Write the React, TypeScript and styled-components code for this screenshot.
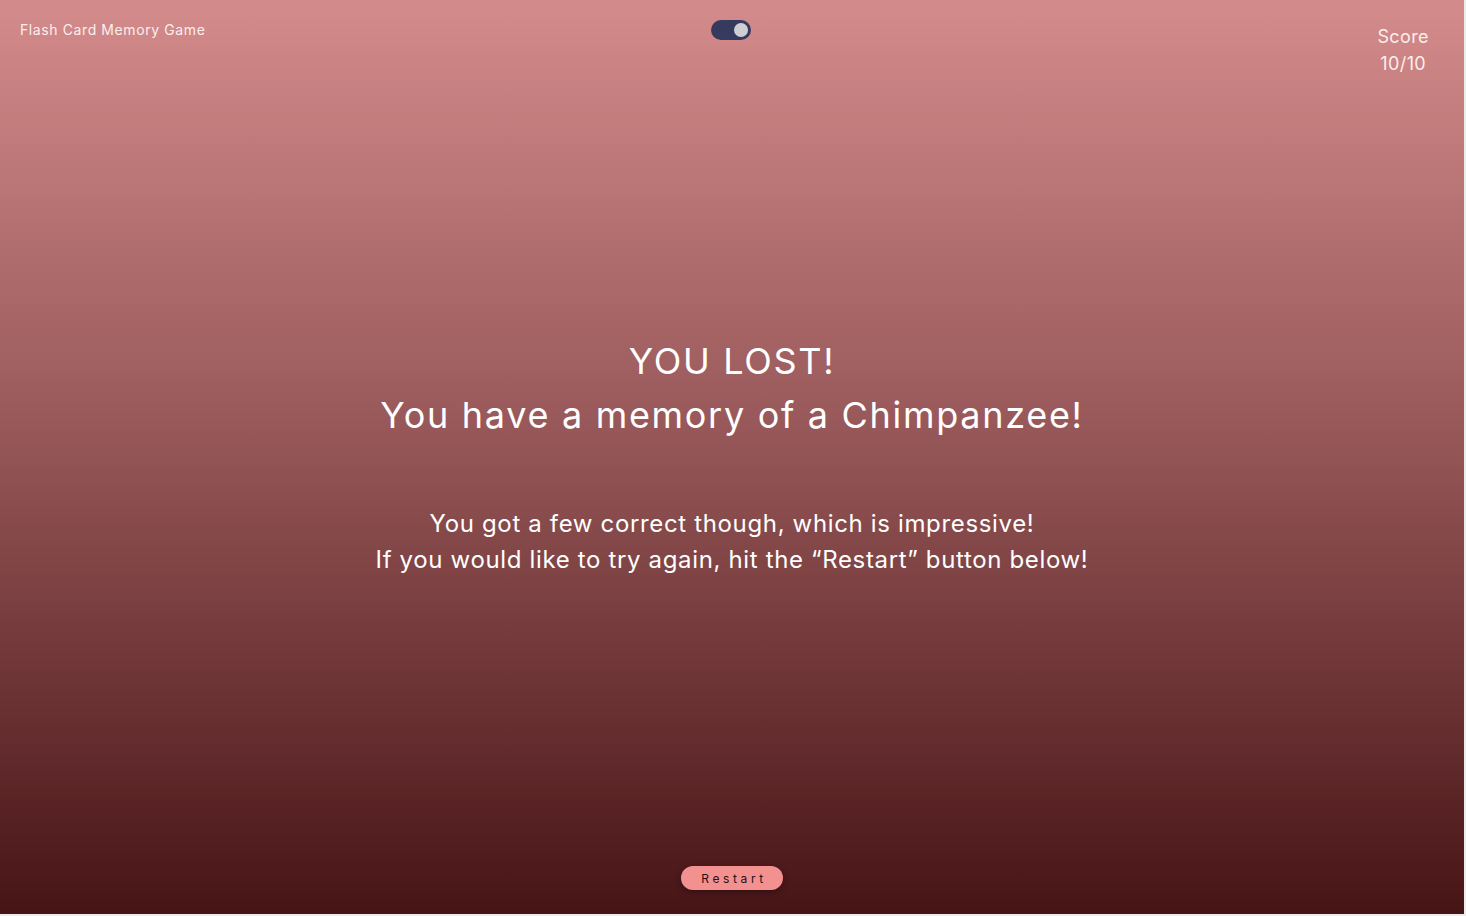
import styled, { createGlobalStyle } from "styled-components";

const GlobalStyle = createGlobalStyle`
    html, body {
        margin: 0;
        padding: 0;
        background: #ececec;
    }
    body {
        font-family: "Inter", "Noto Sans", sans-serif;
    }
`;

const Page = styled.main`
    width: 1464px;
    height: 914px;
    background: linear-gradient(180deg, #d48b8b 0%, #9a5a5b 45%, #471416 100%);
    color: #fff;
    display: flex;
    flex-direction: column;
    box-sizing: border-box;
`;

const Header = styled.header`
    display: grid;
    grid-template-columns: 1fr auto 1fr;
    align-items: start;
    padding: 20px 36px 0 20px;
`;

const Title = styled.span`
    font-size: 14px;
    font-weight: 400;
    letter-spacing: 0.6px;
    line-height: 20px;
    color: #fbeeee;
`;

const Toggle = styled.button<{ $on: boolean }>`
    width: 40px;
    height: 20px;
    border: 0;
    border-radius: 10px;
    background: #363a5e;
    padding: 3px;
    display: flex;
    justify-content: ${({ $on }) => ($on ? "flex-end" : "flex-start")};
    cursor: pointer;
    margin-left: 13px;

    &::after {
        content: "";
        width: 14px;
        height: 14px;
        border-radius: 50%;
        background: #cfcfd3;
    }
`;

const Score = styled.div`
    justify-self: end;
    display: flex;
    flex-direction: column;
    align-items: center;
    font-size: 18px;
    line-height: 27px;
    letter-spacing: 0.4px;
    margin-top: 3px;
    margin-right: -1px;
    color: #fbeeee;
`;

const Body = styled.section`
    flex: 1;
    display: flex;
    flex-direction: column;
    align-items: center;
    padding-top: 257px;
    text-align: center;
`;

const Heading = styled.h1`
    margin: 0;
    font-size: 36px;
    font-weight: 400;
    line-height: 54px;
    letter-spacing: 1.7px;
`;

const Message = styled.p`
    margin: 64px 0 0;
    font-size: 24px;
    font-weight: 400;
    line-height: 36px;
    letter-spacing: 0.65px;
`;

const Footer = styled.footer`
    display: flex;
    justify-content: center;
    padding-bottom: 24px;
`;

const RestartButton = styled.button`
    width: 102px;
    height: 24px;
    border: 0;
    border-radius: 12px;
    background: #f39090;
    color: #2a1010;
    font-family: inherit;
    font-size: 12px;
    letter-spacing: 3.6px;
    padding: 0 0 0 4px;
    box-shadow: 0 2px 6px rgba(0, 0, 0, 0.35);
    cursor: pointer;
`;

const App = () => {
	return (
		<>
			<GlobalStyle />
			<Page>
				<Header>
					<Title>Flash Card Memory Game</Title>
					<Toggle $on aria-label="Toggle theme" />
					<Score>
						<span>Score</span>
						<span>10/10</span>
					</Score>
				</Header>

				<Body>
					<Heading>
						YOU LOST!
						<br />
						You have a memory of a Chimpanzee!
					</Heading>
					<Message>
						You got a few correct though, which is impressive!
						<br />
						If you would like to try again, hit the “Restart” button below!
					</Message>
				</Body>

				<Footer>
					<RestartButton>Restart</RestartButton>
				</Footer>
			</Page>
		</>
	);
};

export default App;
